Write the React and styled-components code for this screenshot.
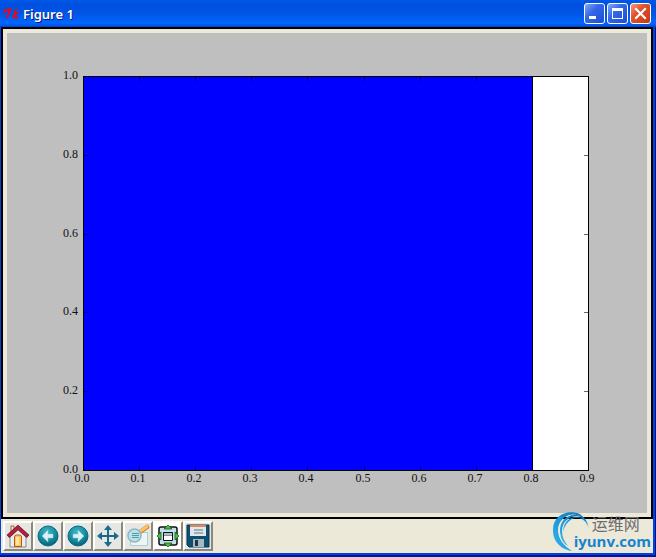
import React from 'react'
import styled, { createGlobalStyle } from 'styled-components';

const X_TICKS = ['0.0', '0.1', '0.2', '0.3', '0.4', '0.5', '0.6', '0.7', '0.8', '0.9'];
const Y_TICKS = ['0.0', '0.2', '0.4', '0.6', '0.8', '1.0'];

// axes box, in figure units
const AXES = { left: 76, right: 581, top: 43, bottom: 437 };
const xAt = (i) => Math.round(AXES.left + (i * (AXES.right - AXES.left)) / 9);
const yAt = (i) => Math.round(AXES.bottom - (i * (AXES.bottom - AXES.top)) / 5);

const App = () => {
  return (
    <>
      <GlobalStyle />
      <Window>
        <TitleBar>
          <TkLogo />
          <Title>Figure 1</Title>
          <WindowButton aria-label='Minimize'>
            <svg viewBox='0 0 21 21'><path d='M5 13h7v3H5z' fill='#fff' /></svg>
          </WindowButton>
          <WindowButton aria-label='Maximize'>
            <svg viewBox='0 0 21 21'>
              <path d='M5 5h11v11H5z M6 8v7h9V8z' fill='#fff' fillRule='evenodd' />
            </svg>
          </WindowButton>
          <WindowButton $close aria-label='Close'>
            <svg viewBox='0 0 21 21'>
              <path d='M6 6l9 9M15 6l-9 9' stroke='#fff' strokeWidth='2.2' strokeLinecap='square' />
            </svg>
          </WindowButton>
        </TitleBar>
        <FigureFrame>
          <Plot />
        </FigureFrame>
        <Toolbar>
          <ToolButton aria-label='Home'><HomeIcon /></ToolButton>
          <ToolButton aria-label='Back'><ArrowIcon /></ToolButton>
          <ToolButton aria-label='Forward'><ArrowIcon forward /></ToolButton>
          <ToolButton aria-label='Pan'><PanIcon /></ToolButton>
          <ToolButton aria-label='Zoom'><ZoomIcon /></ToolButton>
          <ToolButton $white aria-label='Subplots'><SubplotsIcon /></ToolButton>
          <ToolButton aria-label='Save'><SaveIcon /></ToolButton>
        </Toolbar>
        <Watermark>
          <Swirl />
          <WatermarkText>
            <WatermarkName lang='zh'>运维网</WatermarkName>
            <WatermarkSite>iyunv.com</WatermarkSite>
          </WatermarkText>
        </Watermark>
      </Window>
    </>
  )
}

const Plot = () => (
  <PlotSvg viewBox='0 0 640 480'>
    <rect x='76' y='43' width='506' height='395' fill='#fff' />
    <rect x='76.5' y='43.5' width='449' height='394' fill='#00f' stroke='#000' />
    {X_TICKS.map((label, i) => (
      <g key={label}>
        <path d={`M${xAt(i) + 0.5} 433v4M${xAt(i) + 0.5} 44v4`} stroke='#000' strokeOpacity='0.6' />
        <text x={xAt(i) - 1} y='449' textAnchor='middle'>{label}</text>
      </g>
    ))}
    {Y_TICKS.map((label, i) => (
      <g key={label}>
        <path d={`M77 ${yAt(i) + 0.5}h4M577 ${yAt(i) + 0.5}h4`} stroke='#000' strokeOpacity='0.6' />
        <text x='71' y={yAt(i) + 3} textAnchor='end'>{label}</text>
      </g>
    ))}
    <rect x='76.5' y='43.5' width='505' height='394' fill='none' stroke='#000' />
  </PlotSvg>
)

const TkLogo = () => (
  <svg width='16' height='16' viewBox='0 0 16 16' fill='none' stroke='#f00'>
    <path d='M1 7L2 4.5L8 3' strokeWidth='2' />
    <path d='M7.5 3L4 12' strokeWidth='1.8' />
    <path d='M13.5 2.5L10 12M10.5 9L15 6.5' strokeWidth='1.5' />
    <path d='M11.5 9L13 12L15 10.5' strokeWidth='1.5' />
  </svg>
)

const HomeIcon = () => (
  <svg width='24' height='24' viewBox='0 0 24 24'>
    <path d='M5 2h3v8H5z' fill='#f8e2c0' stroke='#9a6838' />
    <path d='M4 11l8-7 8 7v12H4z' fill='#ececec' stroke='#888' />
    <path d='M8.5 22.5V13q0-2 2-2h3q2 0 2 2v9.5z' fill='#ffc65c' stroke='#a85c20' />
    <path d='M10 13h3v8h-3z' fill='#ffe3a0' />
    <path d='M2 12.5L12 3.5l10 9' fill='none' stroke='#6e1426' strokeWidth='4' />
    <path d='M2.5 12L12 3.5l9.5 8.5' fill='none' stroke='#b7213f' strokeWidth='2.5' />
  </svg>
)

const ArrowIcon = ({ forward }) => (
  <svg width='24' height='24' viewBox='0 0 24 24'>
    <defs>
      <radialGradient id='ball' cx='0.45' cy='0.3' r='0.7'>
        <stop offset='0' stopColor='#42b6c6' />
        <stop offset='0.6' stopColor='#168ca2' />
        <stop offset='1' stopColor='#086078' />
      </radialGradient>
    </defs>
    <circle cx='12' cy='12' r='10' fill='url(#ball)' stroke='#0c6880' />
    <path
      d='M6 12l6-6v4h5v4h-5v4z'
      fill='#d9f1f4'
      stroke='#87c9d2'
      strokeWidth='0.6'
      transform={forward ? 'matrix(-1 0 0 1 24 0)' : undefined}
    />
  </svg>
)

const PanIcon = () => (
  <svg width='24' height='24' viewBox='0 0 24 24' fill='#176d89'>
    <path d='M11 4h2v16h-2zM4 11h16v2H4z' />
    <path d='M12 1l4 5H8zM12 23l4-5H8zM1 12l5-4v8zM23 12l-5-4v8z' />
  </svg>
)

const ZoomIcon = () => (
  <svg width='24' height='24' viewBox='0 0 24 24'>
    <path d='M4.5 8.5h17v13h-17z' fill='#edf5f5' stroke='#a8cfd7' />
    <path d='M14 8l7-5' stroke='#c88438' strokeWidth='4.5' strokeLinecap='round' />
    <path d='M14 7.5l7-5' stroke='#ffc26c' strokeWidth='3' strokeLinecap='round' />
    <circle cx='8.5' cy='11.5' r='6.5' fill='#bfe0e7' stroke='#8bb9c4' strokeWidth='1.5' />
    <path d='M6 9.5h7M6 11.5h7M6 13.5h7' stroke='#4c9cad' />
  </svg>
)

const SubplotsIcon = () => (
  <svg width='24' height='24' viewBox='0 0 24 24'>
    <rect x='3' y='3' width='18' height='18' rx='2' fill='#c5dcea' stroke='#111' strokeWidth='1.5' />
    <path d='M7.5 8.5h9v8h-9z' fill='#8a9094' stroke='#111' />
    <path d='M8 12h8v4H8z' fill='#fff' />
    <path d='M8 9h8v2H8z' fill='#9fc4dc' />
    <path
      d='M12 1l4 4H8zM12 23l4-4H8zM1 12l4-4v8zM23 12l-4-4v8z'
      fill='#3fc43a'
      stroke='#185c18'
      strokeWidth='0.8'
    />
  </svg>
)

const SaveIcon = () => (
  <svg width='24' height='24' viewBox='0 0 24 24'>
    <path d='M1 1h22v22H3l-2-2z' fill='#0d4f70' stroke='#083750' />
    <path d='M4 1h16v11H4z' fill='#dfe9ec' />
    <path d='M4 1h16v2H4z' fill='#e48754' />
    <path d='M8 6h9M8 9h9' stroke='#61757d' />
    <path d='M7 15h11v8H7z' fill='#a9b8c0' />
    <path d='M9 16h3v6H9z' fill='#15394e' />
  </svg>
)

const Swirl = () => (
  <svg width='40' height='42' viewBox='0 0 40 42'>
    <defs>
      <linearGradient id='swirl' x1='1' y1='0' x2='0' y2='1'>
        <stop offset='0' stopColor='#0a5f9e' />
        <stop offset='0.5' stopColor='#1b98dc' />
        <stop offset='1' stopColor='#35b4f0' />
      </linearGradient>
    </defs>
    <g fill='url(#swirl)'>
      <path d='M30 5C17-2 0 5 1 21C1 32 10 40 20 41Q7 33 6 22C5 10 16 1 30 5z' />
      <path d='M30 7C19 1 7 9 8 22Q9 32 16 36Q10 29 10 21C10 11 19 4 30 7z' />
      <path d='M37 19C35 7 24 4 16 10Q11 14 11 22Q13 13 20 9C28 5 35 11 37 19z' />
      <path d='M36 15C33 3 20 0 12 6Q24 2 30 8Q34 11 36 15z' />
    </g>
  </svg>
)

const GlobalStyle = createGlobalStyle`
  * {
    box-sizing: border-box;
  }

  body {
    margin: 0;
  }
`;

const Window = styled.main`
  position: relative;
  display: flex;
  flex-direction: column;
  min-height: 100vh;
  padding: 0 3px 4px 1px;
  background: #0042dc;
  box-shadow: inset -1px -2px #00149c;
`;

const TitleBar = styled.header`
  display: flex;
  align-items: center;
  gap: 2px;
  height: 27px;
  margin: 0 -3px 0 -1px;
  padding: 0 5px 0 3px;
  background: linear-gradient(
    to bottom,
    #0058e6 0%,
    #0050e0 20%,
    #0055e5 50%,
    #0066ff 85%,
    #0058ee 94%,
    #0040c8 100%
  );
`;

const Title = styled.h1`
  flex: 1;
  margin: 0;
  padding-left: 2px;
  color: #fff;
  font: 600 13px/16px 'Noto Sans', 'Open Sans', sans-serif;
  text-shadow: 1px 1px #0a1883;
`;

const WindowButton = styled.button`
  width: 21px;
  height: 21px;
  padding: 0;
  border: 1px solid #fff;
  border-radius: 3px;
  background: ${props => props.$close
    ? 'linear-gradient(135deg, #f09a80, #e1502c 40%, #c53a10)'
    : 'linear-gradient(135deg, #86a8f8, #3568e8 40%, #1c4cd4)'};

  svg {
    display: block;
    width: 21px;
    height: 21px;
    margin: -1px;
    fill: none;
  }
`;

const FigureFrame = styled.section`
  padding: 4px;
  border: 2px solid #000;
  background: #ece9d8;
`;

const PlotSvg = styled.svg`
  display: block;
  width: 100%;
  height: auto;
  background: #bfbfbf;

  text {
    fill: #111;
    font-family: 'Liberation Serif', serif;
    font-size: 12px;
  }
`;

const Toolbar = styled.nav`
  display: flex;
  flex: 1;
  align-items: flex-start;
  padding: 2px;
  background: #ece9d8;
`;

const ToolButton = styled.button`
  display: flex;
  align-items: center;
  justify-content: center;
  width: 30px;
  height: 30px;
  padding: 0;
  border: 2px solid;
  border-color: #fffef8 #8c897c #8c897c #fffef8;
  background: ${props => props.$white ? '#fff' : '#e6e6e4'};
`;

const Watermark = styled.aside`
  position: absolute;
  right: 5px;
  bottom: 5px;
  display: flex;
  pointer-events: none;
`;

const WatermarkText = styled.div`
  display: flex;
  flex-direction: column;
  margin-left: -18px;
  padding-top: 4px;
`;

const WatermarkName = styled.span`
  padding-left: 18px;
  color: #6d6d72;
  font: 16px/18px 'Noto Sans CJK SC', sans-serif;
`;

const WatermarkSite = styled.span`
  color: #1683cf;
  font: bold 15px/18px 'Open Sans', sans-serif;
`;

export default App
